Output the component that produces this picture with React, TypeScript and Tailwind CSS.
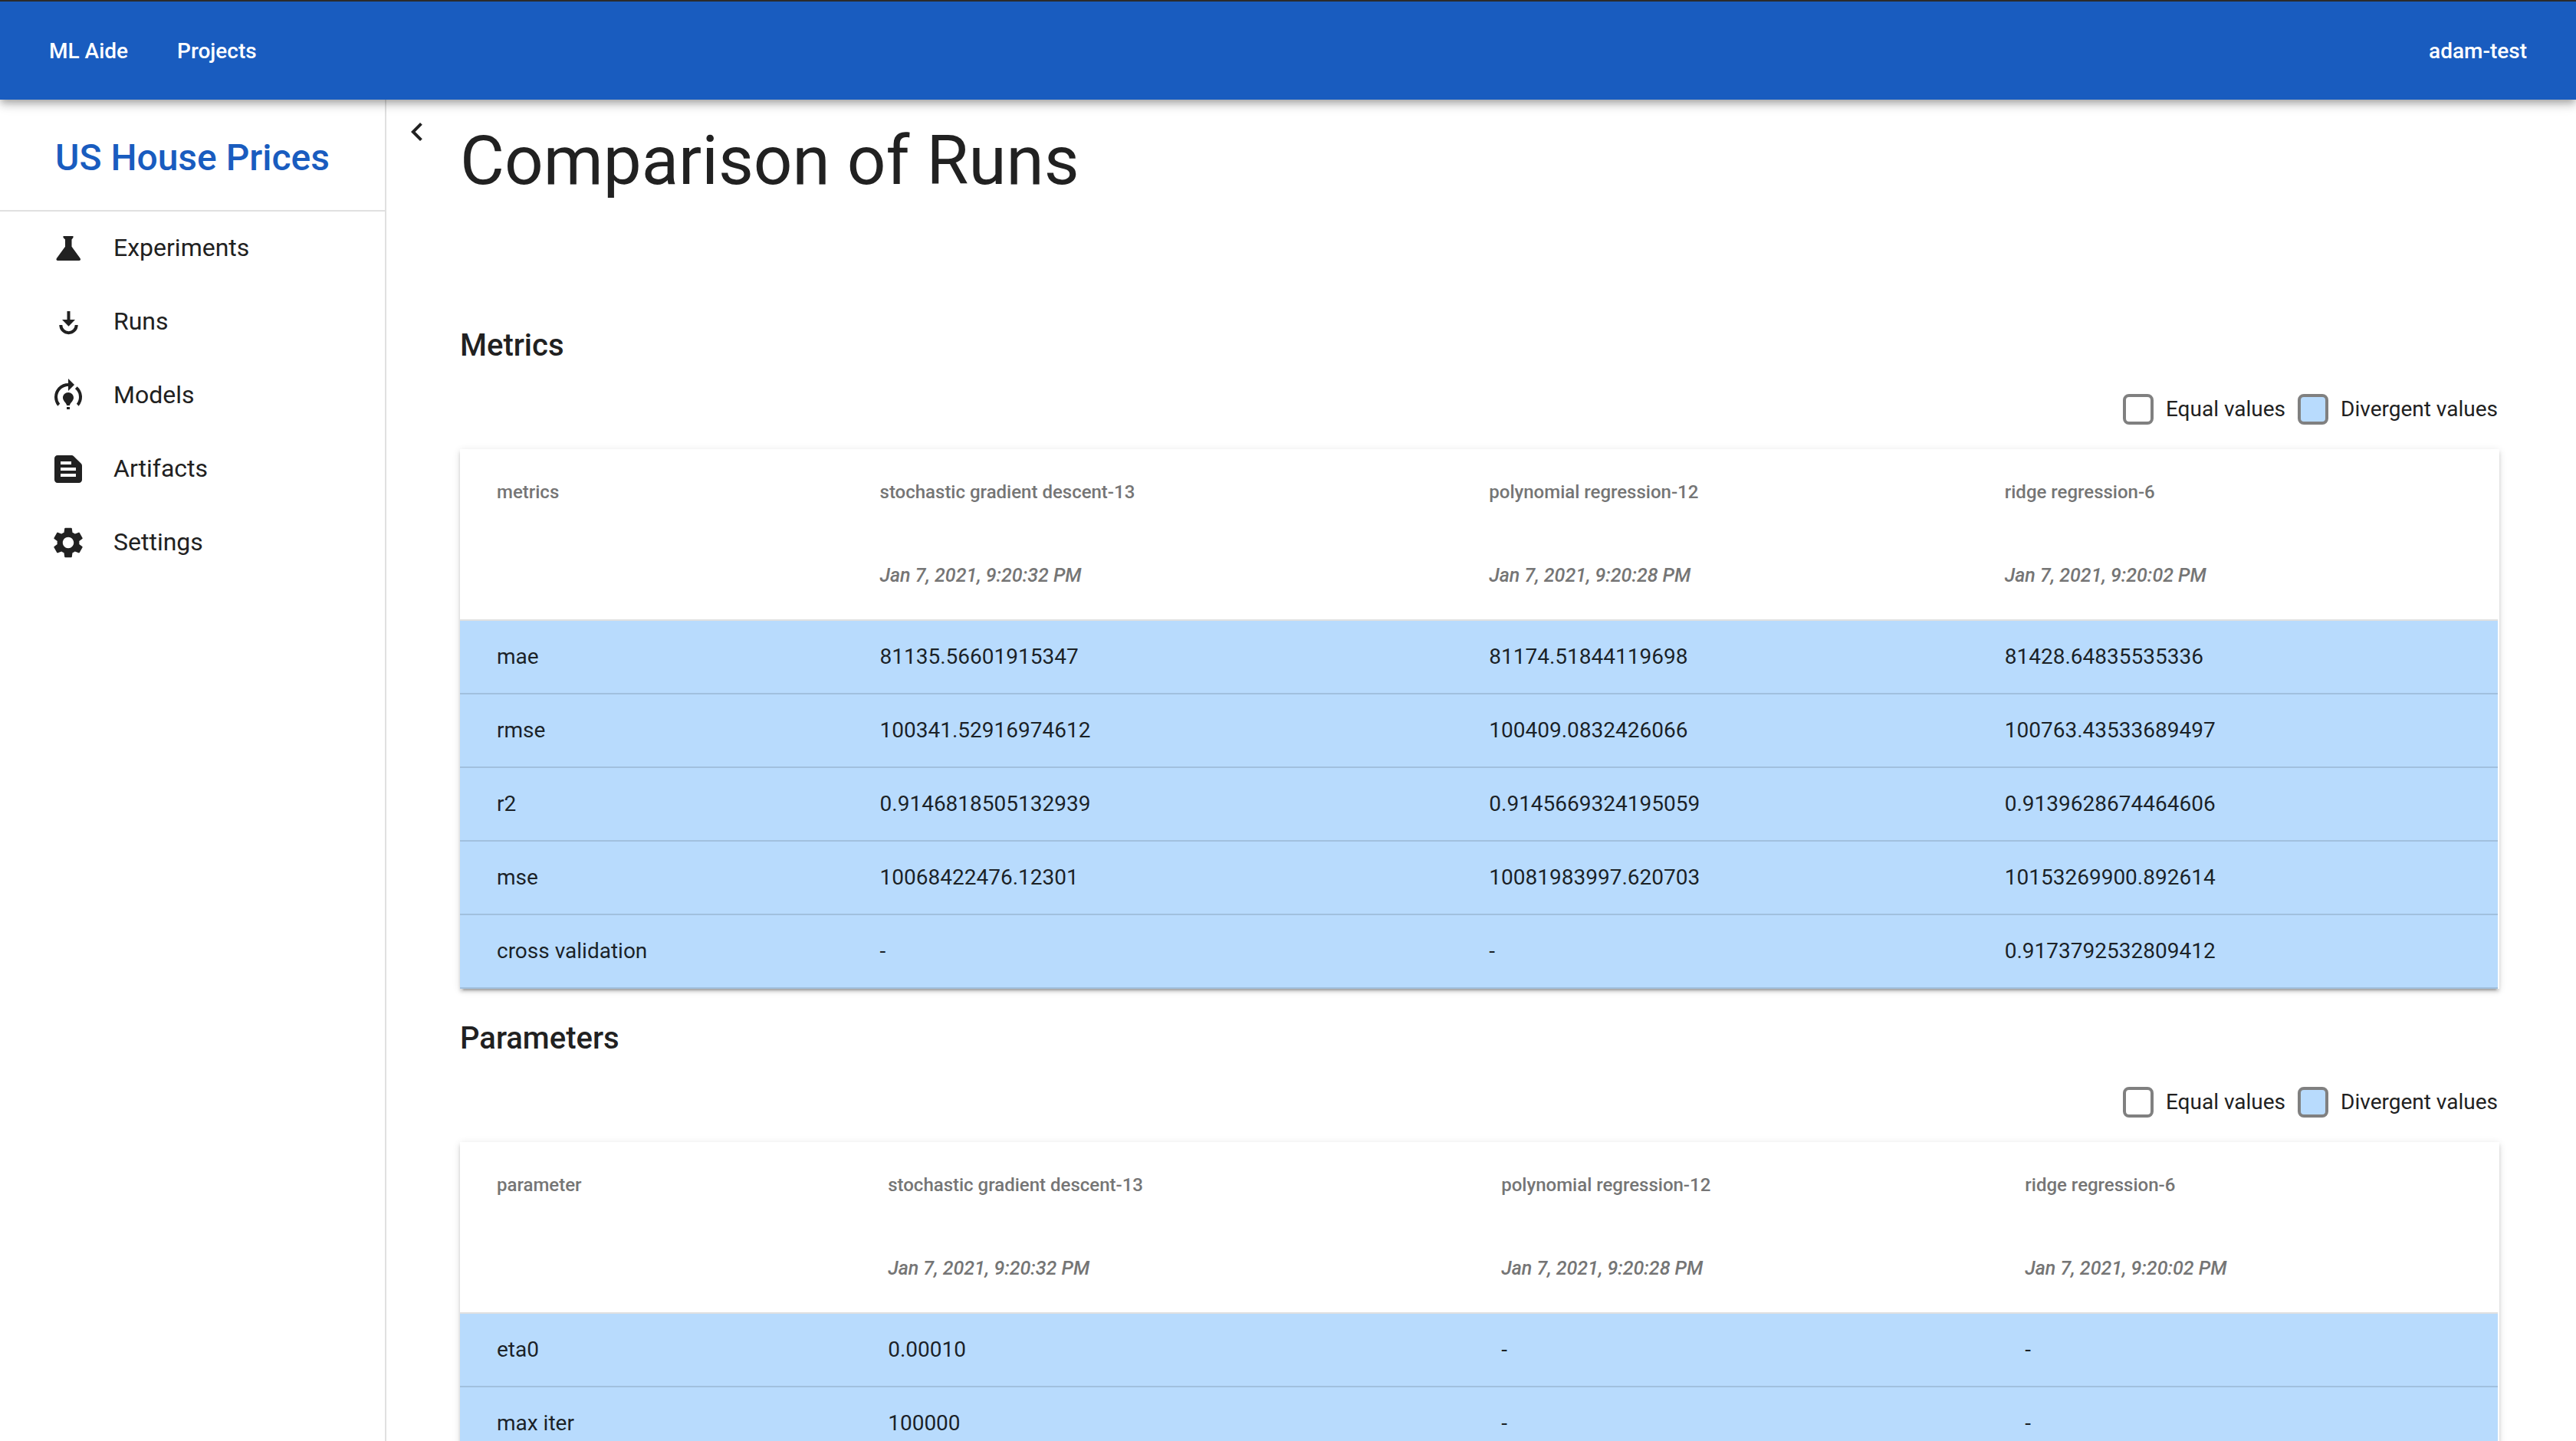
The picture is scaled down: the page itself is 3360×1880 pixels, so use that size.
import type { ReactNode } from "react";
import { MdChevronLeft, MdModelTraining, MdSettings, MdTextSnippet } from "react-icons/md";

function FlaskIcon() {
  return (
    <svg viewBox="0 0 48 48" className="size-12" fill="currentColor" aria-hidden="true">
      <path d="M17.500 8h13v2L28.500 12.500v9.200L39.600 37c1 1.600.4 3-1.600 3H10.500c-2 0-2.600-1.400-1.600-3L20 21.700v-9.200L17.500 10z" />
    </svg>
  );
}

function RunsIcon() {
  return (
    <svg viewBox="0 0 48 48" className="size-12" aria-hidden="true">
      <path d="M22.500 10h4v11h6.500l-8.500 8.700-8.500-8.700h6.500z" fill="currentColor" />
      <path d="M14.300 28a10.200 10.200 0 0 0 20.400 0" fill="none" stroke="currentColor" strokeWidth="4" />
    </svg>
  );
}

const navItems: { label: string; icon: ReactNode }[] = [
  { label: "Experiments", icon: <FlaskIcon /> },
  { label: "Runs", icon: <RunsIcon /> },
  { label: "Models", icon: <MdModelTraining className="size-12" /> },
  { label: "Artifacts", icon: <MdTextSnippet className="size-12" /> },
  { label: "Settings", icon: <MdSettings className="size-12" /> },
];

const runs = [
  { name: "stochastic gradient descent-13", time: "Jan 7, 2021, 9:20:32 PM" },
  { name: "polynomial regression-12", time: "Jan 7, 2021, 9:20:28 PM" },
  { name: "ridge regression-6", time: "Jan 7, 2021, 9:20:02 PM" },
];

const metrics = [
  ["mae", "81135.56601915347", "81174.51844119698", "81428.64835535336"],
  ["rmse", "100341.52916974612", "100409.0832426066", "100763.43533689497"],
  ["r2", "0.9146818505132939", "0.9145669324195059", "0.9139628674464606"],
  ["mse", "10068422476.12301", "10081983997.620703", "10153269900.892614"],
  ["cross validation", "-", "-", "0.9173792532809412"],
];

const parameters = [
  ["eta0", "0.00010", "-", "-"],
  ["max iter", "100000", "-", "-"],
];

const metricColumns = ["w-[20.6%]", "w-[29.9%]", "w-[25.3%]", "w-[24.2%]"];
const parameterColumns = ["w-[21%]", "w-[30.1%]", "w-[25.7%]", "w-[23.2%]"];

function Legend() {
  return (
    <div className="mt-8 flex items-center justify-end gap-4 pr-0.5 text-[28px] leading-10">
      <span className="size-10 rounded-lg border-4 border-[#808080] bg-white" />
      <span>Equal values</span>
      <span className="size-10 rounded-lg border-4 border-[#808080] bg-[#b8dbfd]" />
      <span>Divergent values</span>
    </div>
  );
}

type ComparisonProps = { title: string; label: string; rows: string[][]; columns: string[] };

function Comparison({ title, label, rows, columns }: ComparisonProps) {
  return (
    <section className="mb-8">
      <h2 className="pt-0.5 text-[40px] leading-[62px] font-medium">{title}</h2>
      <Legend />
      <div className="mt-8 bg-white pr-0.5 shadow-[0_6px_2px_-4px_rgba(0,0,0,0.2),0_4px_4px_0_rgba(0,0,0,0.14),0_2px_10px_0_rgba(0,0,0,0.12)]">
        <table className="w-full table-fixed border-separate border-spacing-0 text-left">
          <colgroup>
            {columns.map((c) => (
              <col key={c} className={c} />
            ))}
          </colgroup>
          <thead className="leading-7 text-[#757575]">
            <tr>
              <th className="h-28 pl-12 text-[24px] font-medium">{label}</th>
              {runs.map((r) => (
                <th key={r.name} className="h-28 text-[24px] font-medium">
                  {r.name}
                </th>
              ))}
            </tr>
            <tr>
              <td className="h-28 border-b-2 border-[#e0e0e0]" />
              {runs.map((r) => (
                <td key={r.name} className="h-28 border-b-2 border-[#e0e0e0] pb-1 text-[25px] font-medium italic">
                  {r.time}
                </td>
              ))}
            </tr>
          </thead>
          <tbody className="bg-[#b8dbfd] text-[28px] leading-8 text-black/87">
            {rows.map((row) => (
              <tr key={row[0]}>
                {row.map((cell, i) => (
                  <td key={i} className="h-24 border-b-2 border-black/12 first:pl-12">
                    {cell}
                  </td>
                ))}
              </tr>
            ))}
          </tbody>
        </table>
      </div>
    </section>
  );
}

export default function App() {
  return (
    <div className="flex h-screen flex-col overflow-hidden bg-white font-[Roboto,sans-serif] text-[#212121]">
      <header className="relative z-10 flex h-[130px] shrink-0 items-center justify-between border-t-2 border-[#2b2b2b] bg-[#195cbf] px-16 pt-0.5 text-[28px] leading-8 font-medium text-white shadow-[0_4px_8px_-2px_rgba(0,0,0,0.2),0_8px_10px_0_rgba(0,0,0,0.14),0_2px_20px_0_rgba(0,0,0,0.12)]">
        <nav className="flex gap-16">
          <a href="#home">ML Aide</a>
          <a href="#projects">Projects</a>
        </nav>
        <a href="#account">adam-test</a>
      </header>
      <div className="flex min-h-0 flex-1">
        <aside className="w-[504px] shrink-0 border-r-2 border-[#e0e0e0]">
          <div className="flex h-[146px] items-center justify-center border-b-2 border-[#e0e0e0] pt-2 text-[48px] font-medium text-[#195cbf]">
            US House Prices
          </div>
          <nav>
            {navItems.map((item) => (
              <a key={item.label} href="#section" className="flex h-24 items-center gap-[35px] pl-[65px] text-[32px]">
                {item.icon}
                <span className="pb-0.5">{item.label}</span>
              </a>
            ))}
          </nav>
        </aside>
        <main className="flex min-w-0 flex-1 items-start gap-8 overflow-hidden pr-[100px] pl-4">
          <button type="button" aria-label="Collapse sidebar" className="mt-[18px]">
            <MdChevronLeft className="size-12" />
          </button>
          <div className="min-w-0 flex-1 pt-8">
            <h1 className="mb-40 text-[89px] leading-24">Comparison of Runs</h1>
            <Comparison title="Metrics" label="metrics" rows={metrics} columns={metricColumns} />
            <Comparison title="Parameters" label="parameter" rows={parameters} columns={parameterColumns} />
          </div>
        </main>
      </div>
    </div>
  );
}
